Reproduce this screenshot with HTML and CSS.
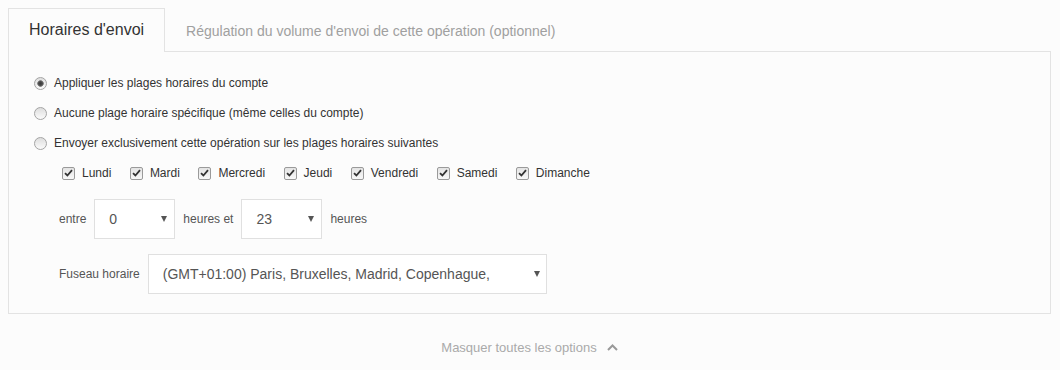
FILE: index.html
```html
<!DOCTYPE html>
<html lang="fr">

<head>
    <meta charset="UTF-8">
    <meta name="viewport" content="width=device-width, initial-scale=1.0">
    <title>Horaires d'envoi</title>
    <link rel="stylesheet" href="styles.css">
</head>

<body>
    <div class="tabs">
        <div class="tab active">Horaires d'envoi</div>
        <div class="tab">Régulation du volume d'envoi de cette opération (optionnel)</div>
    </div>
    <div class="panel">
        <label class="choice"><input type="radio" name="plage" checked> Appliquer les plages horaires du compte</label>
        <label class="choice"><input type="radio" name="plage"> Aucune plage horaire spécifique (même celles du compte)</label>
        <label class="choice"><input type="radio" name="plage"> Envoyer exclusivement cette opération sur les plages horaires suivantes</label>

        <div class="days">
            <label class="day"><span class="box"><svg width="9" height="8" viewBox="0 0 9 8"><path d="M1 4.2 L3.4 6.5 L8 1.2" fill="none" stroke="#333" stroke-width="1.8"/></svg></span>Lundi</label>
            <label class="day"><span class="box"><svg width="9" height="8" viewBox="0 0 9 8"><path d="M1 4.2 L3.4 6.5 L8 1.2" fill="none" stroke="#333" stroke-width="1.8"/></svg></span>Mardi</label>
            <label class="day"><span class="box"><svg width="9" height="8" viewBox="0 0 9 8"><path d="M1 4.2 L3.4 6.5 L8 1.2" fill="none" stroke="#333" stroke-width="1.8"/></svg></span>Mercredi</label>
            <label class="day"><span class="box"><svg width="9" height="8" viewBox="0 0 9 8"><path d="M1 4.2 L3.4 6.5 L8 1.2" fill="none" stroke="#333" stroke-width="1.8"/></svg></span>Jeudi</label>
            <label class="day"><span class="box"><svg width="9" height="8" viewBox="0 0 9 8"><path d="M1 4.2 L3.4 6.5 L8 1.2" fill="none" stroke="#333" stroke-width="1.8"/></svg></span>Vendredi</label>
            <label class="day"><span class="box"><svg width="9" height="8" viewBox="0 0 9 8"><path d="M1 4.2 L3.4 6.5 L8 1.2" fill="none" stroke="#333" stroke-width="1.8"/></svg></span>Samedi</label>
            <label class="day"><span class="box"><svg width="9" height="8" viewBox="0 0 9 8"><path d="M1 4.2 L3.4 6.5 L8 1.2" fill="none" stroke="#333" stroke-width="1.8"/></svg></span>Dimanche</label>
        </div>

        <div class="hours">
            <span>entre</span>
            <div class="select small"><span>0</span><span class="arrow"></span></div>
            <span>heures et</span>
            <div class="select small"><span>23</span><span class="arrow"></span></div>
            <span>heures</span>
        </div>

        <div class="hours zone">
            <span>Fuseau horaire</span>
            <div class="select wide"><span>(GMT+01:00) Paris, Bruxelles, Madrid, Copenhague,</span><span class="arrow"></span></div>
        </div>
    </div>
    <div class="more">
        Masquer toutes les options
        <svg width="11" height="7" viewBox="0 0 11 7"><path d="M1 6 L5.5 1.5 L10 6" fill="none" stroke="#999" stroke-width="2"/></svg>
    </div>
</body>

</html>
```

FILE: styles.css
```css
body {
    margin: 0;
    padding: 8px 9px 0 8px;
    background-color: #fcfcfc;
    font-family: "Liberation Sans", Arial, sans-serif;
    color: #333;
}

.tabs {
    display: flex;
    margin-bottom: -1px;
}

.tab {
    border: 1px solid transparent;
    border-bottom: none;
    padding: 13px 20px 12px 20px;
    font-size: 14px;
    line-height: 18px;
    color: #a0a0a0;
}

.tab.active {
    border-color: #e3e3e3;
    background-color: #fcfcfc;
    padding: 12px 20px 13px 20px;
    font-size: 16px;
    color: #333;
    position: relative;
}

.panel {
    border: 1px solid #e3e3e3;
    background-color: #fcfcfc;
    padding: 16px 0 19px 25px;
    font-size: 12px;
}

.choice {
    display: flex;
    align-items: center;
    height: 30px;
    gap: 3px;
}

.choice input {
    appearance: none;
    width: 13px;
    height: 13px;
    margin: 0 4px 0 0;
    border: 1px solid #a4a4a4;
    border-radius: 50%;
    background: linear-gradient(#dedede, #fbfbfb);
}

.choice input:checked {
    background: radial-gradient(circle, #3a3a3a 0, #4d4d4d 2px, #8a8a8a 3px, transparent 3.6px), linear-gradient(#dedede, #fbfbfb);
}

.days {
    display: flex;
    align-items: center;
    height: 30px;
    padding-left: 28px;
}

.day {
    display: flex;
    align-items: center;
    gap: 7px;
    margin-right: 18.5px;
}

.box {
    width: 11px;
    height: 11px;
    border: 1px solid #9a9a9a;
    border-radius: 2px;
    background: linear-gradient(#e4e4e4, #f8f8f8);
    display: flex;
    justify-content: center;
    align-items: center;
}

.hours {
    display: flex;
    align-items: center;
    gap: 8px;
    margin-top: 11px;
    padding-left: 25px;
    color: #555;
}

.zone {
    margin-top: 15px;
}

.select {
    height: 38px;
    border: 1px solid #e0e0e0;
    background-color: #fff;
    display: flex;
    align-items: center;
    justify-content: space-between;
    padding: 0 7px 0 14px;
    font-size: 14px;
    color: #555;
}

.small {
    width: 58px;
}

.wide {
    width: 377px;
    padding-right: 6px;
}

.arrow {
    width: 0;
    height: 0;
    border-left: 3px solid transparent;
    border-right: 3px solid transparent;
    border-top: 6px solid #555;
}

.more {
    display: flex;
    justify-content: center;
    align-items: center;
    gap: 10px;
    margin-top: 26px;
    font-size: 13px;
    color: #aaa;
}
```
